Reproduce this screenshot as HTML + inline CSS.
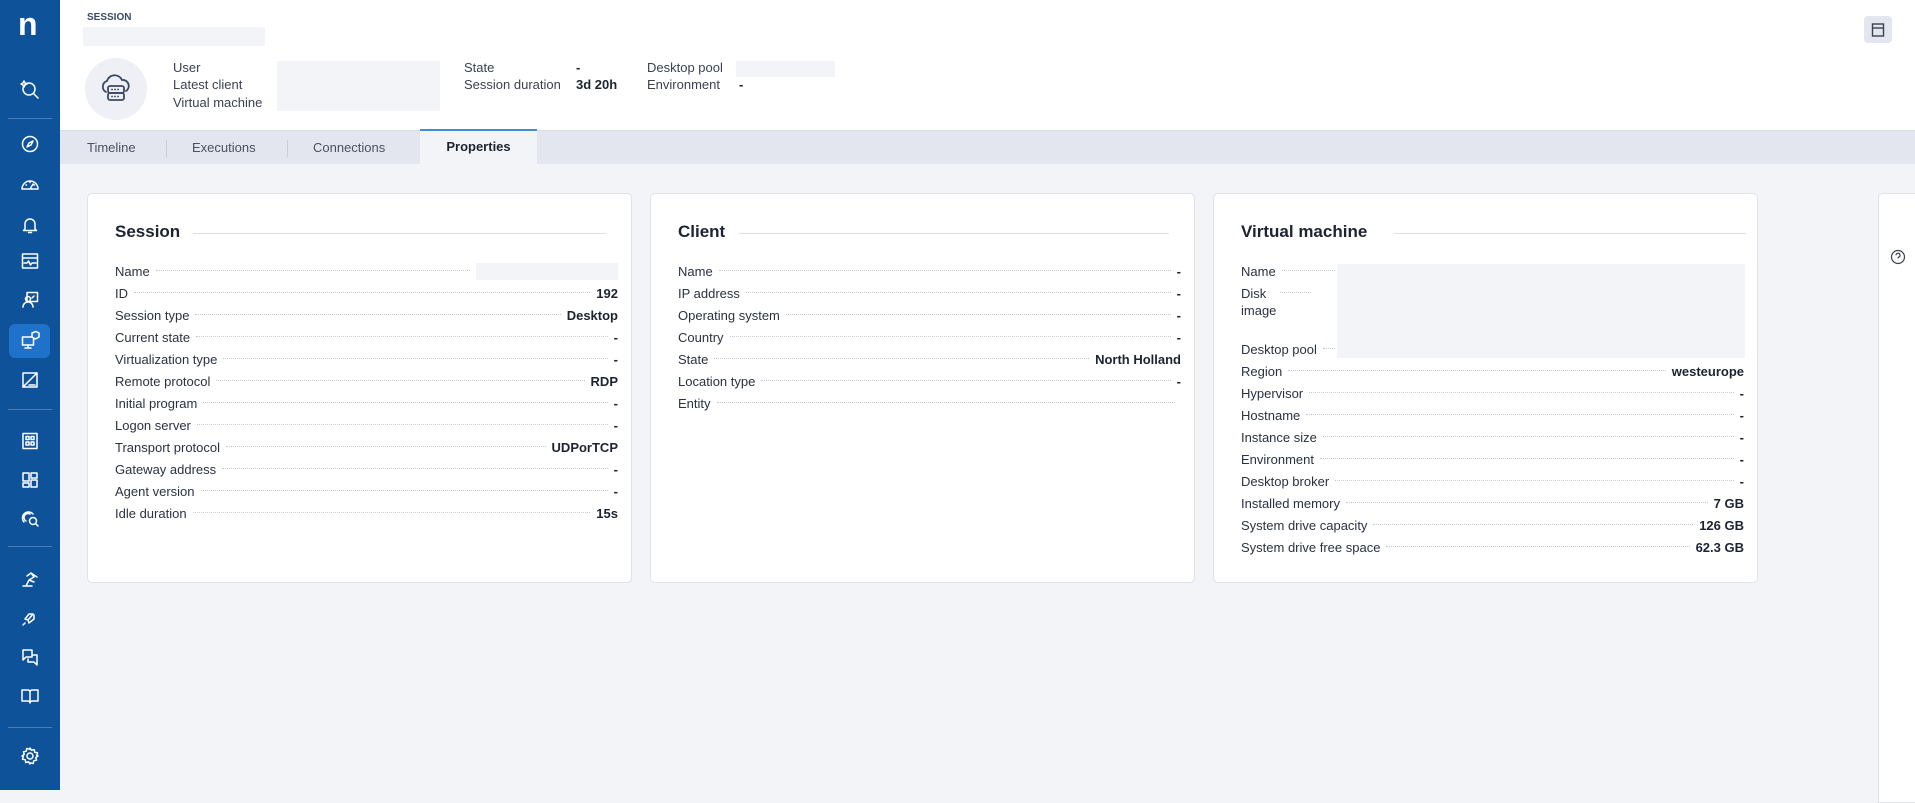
<!DOCTYPE html>
<html><head><meta charset="utf-8"><style>
*{box-sizing:border-box;margin:0;padding:0}
body{width:1915px;height:790px;overflow:hidden;background:#f3f4f8;font-family:"Liberation Sans",sans-serif;color:#1d2330;position:relative}
.sb{position:absolute;left:0;top:0;width:60px;height:790px;background:#0e5299}
.sb svg{position:absolute;left:20px;width:20px;height:20px;fill:none;stroke:#fff;stroke-width:1.5;stroke-linecap:round;stroke-linejoin:round}
.div{position:absolute;left:8px;width:44px;height:1px;background:#4a7cb5}
.hdr{position:absolute;left:60px;top:0;right:0;height:131px;background:#fff;border-bottom:1px solid #d9dce6}
.a{position:absolute;white-space:nowrap}
.gray{position:absolute;background:#f3f4f8}
.lbl{font-size:13px;color:#3a4150}
.tabs{position:absolute;left:60px;top:131px;right:0;height:33px;background:#e3e6ef}
.tab{position:absolute;top:0;height:33px;line-height:33px;font-size:13px;color:#4a5160}
.sep{position:absolute;top:9px;width:1px;height:17px;background:#c9cdd8}
.card{position:absolute;top:193px;height:390px;background:#fff;border:1px solid #dfe2ea;border-radius:5px}
.card h2{position:absolute;left:27px;top:28px;font-size:17px;font-weight:bold;color:#1d2330}
.hl{position:absolute;top:39px;height:1px;background:#dde0ea}
.r{position:absolute;left:27px;right:13px;height:22px;display:flex;align-items:center;font-size:13px;color:#2a3140}
.r .d{flex:1;border-bottom:1px dotted #c4c8d2;margin:0 6px;height:1px;position:relative;top:-1px}
.r b{font-weight:bold;color:#1d2330}
</style></head><body>
<div class="sb">
<div class="a" style="left:18px;top:8px;color:#fff;font-size:32px;font-weight:bold;line-height:32px">n</div>
<svg style="top:79px" viewBox="0 0 20 20"><circle cx="9" cy="10" r="6"/><path d="M13.5 14.5L18 19M4 2l1 2 2 1-2 1-1 2-1-2-2-1 2-1z"/></svg>
<div class="div" style="top:118px"></div>
<svg style="top:134px" viewBox="0 0 20 20"><circle cx="10" cy="10" r="7.5"/><path d="M13 7l-4 2-2 4 4-2z"/></svg>
<svg style="top:174px" viewBox="0 0 20 20"><path d="M2 15a8 8 0 0 1 16 0zM10 15l3-5M6 11h.5M14 11h.5M10 8v.5"/></svg>
<svg style="top:215px" viewBox="0 0 20 20"><path d="M5 14V9a5 5 0 0 1 10 0v5l1.5 1.5h-13zM8.5 17.5h3"/></svg>
<svg style="top:251px" viewBox="0 0 20 20"><rect x="2.5" y="3" width="15" height="14"/><path d="M2.5 7h15M4 12h3l1.5-2 2 4 1.5-2H16"/></svg>
<svg style="top:290px" viewBox="0 0 20 20"><rect x="7" y="2.5" width="10.5" height="9"/><circle cx="8" cy="9" r="2.5"/><path d="M3 17a5 5 0 0 1 10 0M12 8l2-2"/></svg>
<div style="position:absolute;left:9px;top:324px;width:41px;height:34px;background:#1f72c9;border-radius:6px"></div>
<svg style="top:330px" viewBox="0 0 20 20"><rect x="2.5" y="7" width="11" height="8"/><path d="M8 15v3M5 18h6M12 3l4-1.5L19 3v4l-3.5 2L12 7z" fill="#1f72c9"/></svg>
<svg style="top:370px" viewBox="0 0 20 20"><rect x="3" y="3" width="14" height="14"/><path d="M3 17l14-14M9 15h6"/></svg>
<div class="div" style="top:409px"></div>
<svg style="top:431px" viewBox="0 0 20 20"><rect x="3" y="2.5" width="14" height="15"/><rect x="6" y="5.5" width="3" height="3"/><rect x="11" y="5.5" width="3" height="3"/><rect x="6" y="11" width="3" height="3"/><rect x="11" y="11" width="3" height="3"/></svg>
<svg style="top:470px" viewBox="0 0 20 20"><rect x="3" y="3" width="6" height="8"/><rect x="11" y="3" width="6" height="5"/><rect x="3" y="13" width="6" height="4"/><rect x="11" y="10" width="6" height="7"/></svg>
<svg style="top:508px" viewBox="0 0 20 20"><path d="M4 14a6 6 0 1 1 9-8M6 13a4 4 0 0 1 4-7"/><circle cx="13" cy="13" r="3.5"/><path d="M15.5 15.5L18 18"/></svg>
<div class="div" style="top:546px"></div>
<svg style="top:568px" viewBox="0 0 20 20"><path d="M3 18h9M6 18l3-6 5-3-3-4-4 3M11 5l6 4M9 12l5 2"/></svg>
<svg style="top:608px" viewBox="0 0 20 20"><path d="M8 12l-3-1 4-5h4l-5 6zM8 12l1 3 5-4V7M5 15l-2 2"/></svg>
<svg style="top:647px" viewBox="0 0 20 20"><path d="M3 3h9v7H6l-3 3zM8 12v3h6l3 3V8h-5"/></svg>
<svg style="top:686px" viewBox="0 0 20 20"><path d="M2 4h6a2 2 0 0 1 2 2v11a2 2 0 0 0-2-2H2zM18 4h-6a2 2 0 0 0-2 2v11a2 2 0 0 1 2-2h6z"/></svg>
<div class="div" style="top:727px"></div>
<svg style="top:746px" viewBox="0 0 20 20"><circle cx="10" cy="10" r="3"/><path d="M10 2l1.5 2.3 2.7-.7.6 2.7 2.7.6-.7 2.7L18 10l-2.2 1.5.7 2.7-2.7.6-.6 2.7-2.7-.7L10 18l-1.5-2.2-2.7.7-.6-2.7-2.7-.6.7-2.7L2 10l2.2-1.5-.7-2.7 2.7-.6.6-2.7 2.7.7z"/></svg>
</div>

<div class="hdr"></div>
<div class="a" style="left:87px;top:12px;font-size:10px;font-weight:bold;color:#3a4a60">SESSION</div>
<div class="gray" style="left:83px;top:27px;width:182px;height:19px"></div>
<div style="position:absolute;left:85px;top:58px;width:62px;height:62px;border-radius:50%;background:#eef0f5"></div>
<svg style="position:absolute;left:99px;top:72px" width="34" height="34" viewBox="0 0 34 34" fill="none" stroke="#3a4a60" stroke-width="1.8" stroke-linecap="round"><path d="M7 20a6 6 0 0 1 1-11 8 8 0 0 1 15-1 6 6 0 0 1 4 11"/><rect x="9" y="14" width="16" height="7" rx="2"/><rect x="9" y="21" width="16" height="7" rx="2"/><path d="M13 17.5h.1M16 17.5h.1M19 17.5h.1M13 24.5h.1M16 24.5h.1M19 24.5h.1"/></svg>
<div class="a lbl" style="left:173px;top:60px">User</div>
<div class="a lbl" style="left:173px;top:77px">Latest client</div>
<div class="a lbl" style="left:173px;top:95px">Virtual machine</div>
<div class="gray" style="left:277px;top:61px;width:163px;height:50px"></div>
<div class="a lbl" style="left:464px;top:60px">State</div>
<div class="a lbl" style="left:464px;top:77px">Session duration</div>
<div class="a" style="left:576px;top:60px;font-size:13px;font-weight:bold">-</div>
<div class="a" style="left:576px;top:77px;font-size:13px;font-weight:bold">3d 20h</div>
<div class="a lbl" style="left:647px;top:60px">Desktop pool</div>
<div class="a lbl" style="left:647px;top:77px">Environment</div>
<div class="gray" style="left:736px;top:61px;width:99px;height:16px"></div>
<div class="a" style="left:739px;top:77px;font-size:13px;font-weight:bold">-</div>
<div style="position:absolute;left:1864px;top:16px;width:28px;height:27px;background:#e3e6ef;border-radius:4px"></div>
<svg style="position:absolute;left:1870px;top:22px" width="16" height="16" viewBox="0 0 16 16" fill="none" stroke="#3a4150" stroke-width="1.4"><rect x="2.5" y="2" width="11" height="12"/><path d="M2.5 6h11"/></svg>

<div class="tabs">
<div class="tab" style="left:27px">Timeline</div>
<div class="sep" style="left:106px"></div>
<div class="tab" style="left:132px">Executions</div>
<div class="sep" style="left:227px"></div>
<div class="tab" style="left:253px">Connections</div>
<div style="position:absolute;left:360px;top:-2px;width:117px;height:35px;background:#f3f4f8;border-top:2px solid #3b8fe0;text-align:center;line-height:32px;font-size:13px;font-weight:bold;color:#1d2330">Properties</div>
</div>

<div class="card" style="left:87px;width:545px">
<h2>Session</h2><div class="hl" style="left:105px;width:413px"></div>
<div class="r" style="top:66px">Name<span class="d"></span><span style="width:142px;height:17px;background:#f3f4f8"></span></div>
<div class="r" style="top:88px">ID<span class="d"></span><b>192</b></div>
<div class="r" style="top:110px">Session type<span class="d"></span><b>Desktop</b></div>
<div class="r" style="top:132px">Current state<span class="d"></span><b>-</b></div>
<div class="r" style="top:154px">Virtualization type<span class="d"></span><b>-</b></div>
<div class="r" style="top:176px">Remote protocol<span class="d"></span><b>RDP</b></div>
<div class="r" style="top:198px">Initial program<span class="d"></span><b>-</b></div>
<div class="r" style="top:220px">Logon server<span class="d"></span><b>-</b></div>
<div class="r" style="top:242px">Transport protocol<span class="d"></span><b>UDPorTCP</b></div>
<div class="r" style="top:264px">Gateway address<span class="d"></span><b>-</b></div>
<div class="r" style="top:286px">Agent version<span class="d"></span><b>-</b></div>
<div class="r" style="top:308px">Idle duration<span class="d"></span><b>15s</b></div>
</div>

<div class="card" style="left:650px;width:545px">
<h2>Client</h2><div class="hl" style="left:88px;width:430px"></div>
<div class="r" style="top:66px">Name<span class="d"></span><b>-</b></div>
<div class="r" style="top:88px">IP address<span class="d"></span><b>-</b></div>
<div class="r" style="top:110px">Operating system<span class="d"></span><b>-</b></div>
<div class="r" style="top:132px">Country<span class="d"></span><b>-</b></div>
<div class="r" style="top:154px">State<span class="d"></span><b>North Holland</b></div>
<div class="r" style="top:176px">Location type<span class="d"></span><b>-</b></div>
<div class="r" style="top:198px">Entity<span class="d"></span></div>
</div>

<div class="card" style="left:1213px;width:545px">
<h2>Virtual machine</h2><div class="hl" style="left:180px;width:352px"></div>
<div class="gray" style="left:123px;top:70px;width:408px;height:94px"></div>
<div class="r" style="top:66px;right:422px">Name<span class="d" style="margin-right:0"></span></div>
<div class="r" style="top:88px;right:440px">Disk<span class="d" style="margin-left:14px"></span></div>
<div class="r" style="top:105px">image</div>
<div class="r" style="top:144px;right:422px">Desktop pool<span class="d" style="margin-right:0"></span></div>
<div class="r" style="top:166px">Region<span class="d"></span><b>westeurope</b></div>
<div class="r" style="top:188px">Hypervisor<span class="d"></span><b>-</b></div>
<div class="r" style="top:210px">Hostname<span class="d"></span><b>-</b></div>
<div class="r" style="top:232px">Instance size<span class="d"></span><b>-</b></div>
<div class="r" style="top:254px">Environment<span class="d"></span><b>-</b></div>
<div class="r" style="top:276px">Desktop broker<span class="d"></span><b>-</b></div>
<div class="r" style="top:298px">Installed memory<span class="d"></span><b>7 GB</b></div>
<div class="r" style="top:320px">System drive capacity<span class="d"></span><b>126 GB</b></div>
<div class="r" style="top:342px">System drive free space<span class="d"></span><b>62.3 GB</b></div>
</div>

<div style="position:absolute;left:1878px;top:193px;width:50px;height:610px;background:#fff;border:1px solid #dfe2ea;border-radius:5px 0 0 0"></div>
<svg style="position:absolute;left:1890px;top:249px" width="16" height="16" viewBox="0 0 16 16" fill="none" stroke="#3a4150" stroke-width="1.2"><circle cx="8" cy="8" r="6.5"/><path d="M6 6.3a2 2 0 1 1 2.6 1.9c-.5.2-.6.6-.6 1.2M8 11.3v.2"/></svg>
</body></html>
